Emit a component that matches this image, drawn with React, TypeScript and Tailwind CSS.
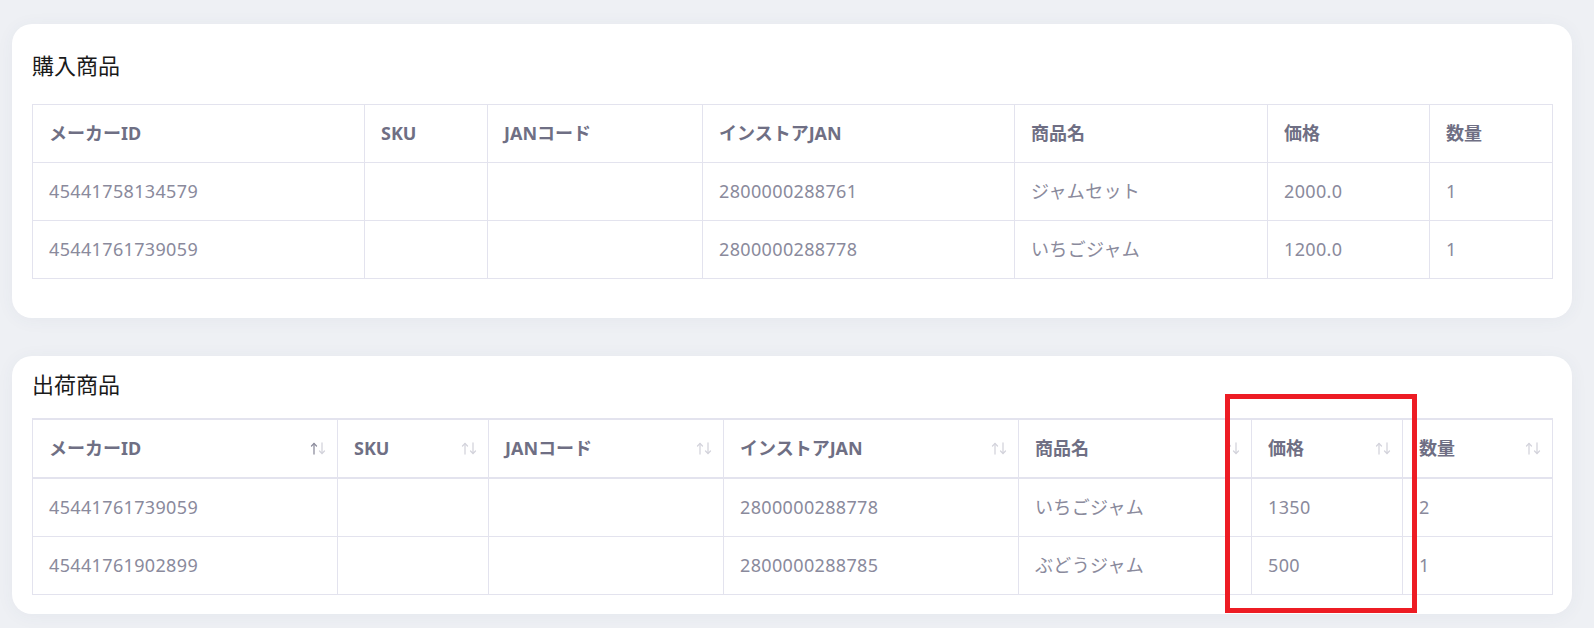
import React from 'react';

type Row = string[];

const font = { fontFamily: '"Noto Sans", "Noto Sans CJK JP", sans-serif' };

const purchaseCols = [
  { label: 'メーカーID', w: 332 },
  { label: 'SKU', w: 123 },
  { label: 'JANコード', w: 215 },
  { label: 'インストアJAN', w: 312 },
  { label: '商品名', w: 253 },
  { label: '価格', w: 162 },
  { label: '数量', w: 123 },
];

const shipCols = [
  { label: 'メーカーID', w: 305 },
  { label: 'SKU', w: 151 },
  { label: 'JANコード', w: 235 },
  { label: 'インストアJAN', w: 295 },
  { label: '商品名', w: 233 },
  { label: '価格', w: 151 },
  { label: '数量', w: 150 },
];

const purchaseRows: Row[] = [
  ['45441758134579', '', '', '2800000288761', 'ジャムセット', '2000.0', '1'],
  ['45441761739059', '', '', '2800000288778', 'いちごジャム', '1200.0', '1'],
];

const shipRows: Row[] = [
  ['45441761739059', '', '', '2800000288778', 'いちごジャム', '1350', '2'],
  ['45441761902899', '', '', '2800000288785', 'ぶどうジャム', '500', '1'],
];

const SortIcon: React.FC<{ active?: boolean }> = ({ active }) => (
  <svg width="16" height="13" viewBox="0 0 16 13" fill="none" strokeWidth="1.3" strokeLinecap="round" strokeLinejoin="round">
    <g stroke={active ? '#8e8e9e' : '#d4d4dc'}>
      <path d="M4 12V1.5" />
      <path d="M1.5 4L4 1.5L6.5 4" />
    </g>
    <g stroke="#d4d4dc">
      <path d="M12 1V11.5" />
      <path d="M9.5 9L12 11.5L14.5 9" />
    </g>
  </svg>
);

const App: React.FC = () => {
  return (
    <div className="relative min-h-screen bg-[#eef0f4] pt-[24px] pl-[12px]" style={font}>
      {/* 購入商品 */}
      <div className="w-[1560px] rounded-[20px] bg-white px-[20px] pt-[25px] pb-[39px] shadow-[0_2px_18px_rgba(60,70,110,0.05)]">
        <h2 className="text-[22px] leading-[33px] text-[#1a1a1a] mb-[22px]">購入商品</h2>
        <table className="w-[1520px] table-fixed border-collapse">
          <colgroup>
            {purchaseCols.map((c) => (
              <col key={c.label} style={{ width: c.w }} />
            ))}
          </colgroup>
          <thead>
            <tr className="h-[58px]">
              {purchaseCols.map((c) => (
                <th key={c.label} className="border border-[#e3e3ee] px-4 text-left text-[18px] font-bold text-[#6f6f84]">
                  {c.label}
                </th>
              ))}
            </tr>
          </thead>
          <tbody>
            {purchaseRows.map((r, i) => (
              <tr key={i} className="h-[58px]">
                {r.map((v, j) => (
                  <td key={j} className="border border-[#e3e3ee] px-4 text-[18px] tracking-[0.35px] text-[#8a8a9c]">
                    {v}
                  </td>
                ))}
              </tr>
            ))}
          </tbody>
        </table>
      </div>

      {/* 出荷商品 */}
      <div className="mt-[38px] w-[1560px] rounded-[20px] bg-white px-[20px] pt-[12px] pb-[19px] shadow-[0_2px_18px_rgba(60,70,110,0.05)]">
        <h2 className="text-[22px] leading-[33px] text-[#1a1a1a] mb-[17px]">出荷商品</h2>
        <table className="w-[1520px] table-fixed border-collapse">
          <colgroup>
            {shipCols.map((c) => (
              <col key={c.label} style={{ width: c.w }} />
            ))}
          </colgroup>
          <thead>
            <tr className="h-[59px]">
              {shipCols.map((c, i) => (
                <th
                  key={c.label}
                  className="border border-[#e3e3ee] border-t-2 border-b-2 p-0 text-left text-[18px] font-bold text-[#6f6f84]"
                >
                  <div className="flex items-center justify-between pl-4 pr-[11px]">
                    <span>{c.label}</span>
                    <SortIcon active={i === 0} />
                  </div>
                </th>
              ))}
            </tr>
          </thead>
          <tbody>
            {shipRows.map((r, i) => (
              <tr key={i} className="h-[58px]">
                {r.map((v, j) => (
                  <td key={j} className="border border-[#e3e3ee] px-4 text-[18px] tracking-[0.35px] text-[#8a8a9c]">
                    {v}
                  </td>
                ))}
              </tr>
            ))}
          </tbody>
        </table>
      </div>

      {/* annotation */}
      <div className="pointer-events-none absolute left-[1225px] top-[394px] h-[219px] w-[192px] border-[5px] border-[#ed1c24]" />
    </div>
  );
};

export default App;
